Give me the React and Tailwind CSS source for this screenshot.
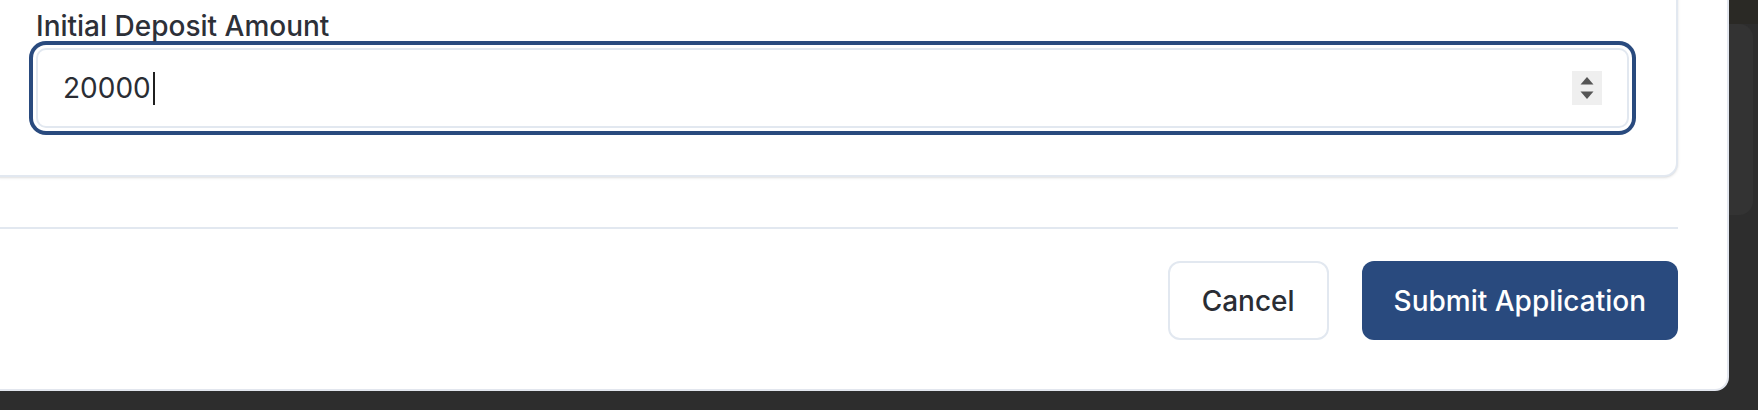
import React from 'react';

const NumberSpinner = () => (
  <svg width="30" height="34" viewBox="0 0 30 34" className="shrink-0">
    <rect x="0" y="0" width="30" height="34" fill="#efefef" />
    <polygon points="8.5,13.5 21.5,13.5 15,6" fill="#555555" />
    <polygon points="8.5,20.5 21.5,20.5 15,28" fill="#555555" />
  </svg>
);

const App = () => {
  return (
    <div className="relative w-[1758px] h-[410px] overflow-hidden bg-[#2d2d2d] font-['Inter','Noto_Sans',sans-serif]">
      {/* window behind the dialog */}
      <div className="absolute right-0 top-0 w-[30px] h-[24px] bg-[#2a2925]" />
      <div className="absolute left-[1728px] top-[24px] w-[25px] h-[191px] rounded-r-[14px] bg-[#333333]" />

      <div className="relative -ml-[64px] -mt-[92px] w-[1793px] bg-white border-2 border-[#e2e6ee] rounded-br-[14px] px-[49px] pt-[49px] pb-[49px]">
        <div className="rounded-[14px] border-2 border-[#e2e8f0] bg-white p-[47px] shadow-sm">
          <label className="block mb-[4px] text-[28px] leading-[36px] font-medium text-[#2d3038]">
            Initial Deposit Amount
          </label>
          <div className="flex items-center h-[80px] rounded-[10px] border-2 border-[#e2e8f0] bg-white pl-[25px] pr-[25px] shadow-[0_0_0_3px_#ffffff,0_0_0_7px_#294a7e]">
            <span className="text-[28px] leading-none text-[#2a2d34]">20000</span>
            <span className="ml-[2px] w-[2px] h-[33px] bg-[#1f1f1f]" />
            <div className="ml-auto">
              <NumberSpinner />
            </div>
          </div>
        </div>

        <div className="mt-[50px] border-t-2 border-[#e2e8f0] pt-[32px] flex justify-end gap-[33px]">
          <button className="h-[79px] px-[32px] rounded-[12px] border-2 border-[#e2e8f0] bg-white text-[28px] font-medium text-[#2a2d34]">
            Cancel
          </button>
          <button className="h-[79px] px-[32px] rounded-[12px] bg-[#294a7e] text-[28px] font-medium text-white">
            Submit Application
          </button>
        </div>
      </div>
    </div>
  );
};

export default App;
